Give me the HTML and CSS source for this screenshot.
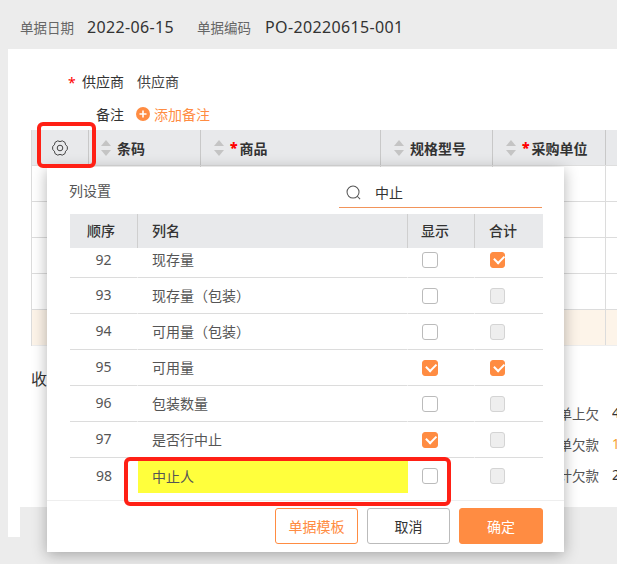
FILE: index.html
```html
<!DOCTYPE html>
<html lang="zh">
<head>
<meta charset="utf-8">
<title>列设置</title>
<link rel="stylesheet" href="styles.css">
</head>
<body>
<div class="page">
  <header class="top">
    <span class="top-label">单据日期</span><span class="top-value">2022-06-15</span>
    <span class="top-label second">单据编码</span><span class="top-value">PO-20220615-001</span>
  </header>
  <main class="sheet">
    <div class="form-row first"><span class="req">*</span><span class="form-label">供应商</span><span class="form-value">供应商</span></div>
    <div class="form-row"><span class="form-label plain">备注</span>
      <span class="add"><svg class="add-icon" viewBox="0 0 14 14"><circle cx="7" cy="7" r="7" fill="#ff8c42"/><path d="M7 3.5v7M3.5 7h7" stroke="#fff" stroke-width="1.6"/></svg>添加备注</span></div>
    <div class="grid">
      <div class="grid-row head">
        <div class="c c0"><svg class="gear" viewBox="0 0 16 16" fill="none" stroke="#444" stroke-width="1"><path d="M15.34 6.44L15.34 9.56L13.54 11.2L13.02 13.57L10.32 15.13L8 14.4L5.68 15.13L2.98 13.57L2.46 11.2L.66 9.56L.66 6.44L2.46 4.8L2.98 2.43L5.68 .87L8 1.6L10.32 .87L13.02 2.43L13.54 4.8Z" stroke-linejoin="round"/><circle cx="8" cy="8" r="2.8"/></svg></div>
        <div class="c c1"><i class="sort"></i>条码</div>
        <div class="c c2"><i class="sort"></i><b class="star">*</b>商品</div>
        <div class="c c3"><i class="sort"></i>规格型号</div>
        <div class="c c4"><i class="sort"></i><b class="star">*</b>采购单位</div>
        <div class="c c5"></div>
      </div>
      <div class="grid-row"><div class="c c0"></div><div class="c c1"></div><div class="c c2"></div><div class="c c3"></div><div class="c c4"></div><div class="c c5"></div></div>
      <div class="grid-row"><div class="c c0"></div><div class="c c1"></div><div class="c c2"></div><div class="c c3"></div><div class="c c4"></div><div class="c c5"></div></div>
      <div class="grid-row"><div class="c c0"></div><div class="c c1"></div><div class="c c2"></div><div class="c c3"></div><div class="c c4"></div><div class="c c5"></div></div>
      <div class="grid-row"><div class="c c0"></div><div class="c c1"></div><div class="c c2"></div><div class="c c3"></div><div class="c c4"></div><div class="c c5"></div></div>
      <div class="grid-row total"><div class="c c0"></div><div class="c c1"></div><div class="c c2"></div><div class="c c3"></div><div class="c c4"></div><div class="c c5"></div></div>
    </div>
    <div class="lower">
      <div class="receive">收</div>
      <div class="sums">
        <div class="sum"><span>本单上欠</span><em>4</em></div>
        <div class="sum"><span>本单欠款</span><em class="hot">1</em></div>
        <div class="sum"><span>累计欠款</span><em>2</em></div>
      </div>
    </div>
    <div class="sheet-foot"></div>
  </main>
</div>

<section class="modal">
  <div class="modal-top">
    <span class="modal-title">列设置</span>
    <div class="search">
      <svg class="search-icon" viewBox="0 0 16 16" fill="none" stroke="#555" stroke-width="1.1"><circle cx="7.5" cy="7.5" r="6.4"/><path d="M12 12l3 3"/></svg>
      <span>中止</span>
    </div>
  </div>
  <div class="cols-head">
    <div class="k1">顺序</div><div class="k2">列名</div><div class="k3">显示</div><div class="k4">合计</div>
  </div>
  <div class="cols-body">
    <div class="col-row clip"><div class="k1">92</div><div class="k2">现存量</div><div class="k3"><i class="box"></i></div><div class="k4"><i class="box on"></i></div></div>
    <div class="col-row"><div class="k1">93</div><div class="k2">现存量（包装）</div><div class="k3"><i class="box"></i></div><div class="k4"><i class="box off"></i></div></div>
    <div class="col-row"><div class="k1">94</div><div class="k2">可用量（包装）</div><div class="k3"><i class="box"></i></div><div class="k4"><i class="box off"></i></div></div>
    <div class="col-row"><div class="k1">95</div><div class="k2">可用量</div><div class="k3"><i class="box on"></i></div><div class="k4"><i class="box on"></i></div></div>
    <div class="col-row"><div class="k1">96</div><div class="k2">包装数量</div><div class="k3"><i class="box"></i></div><div class="k4"><i class="box off"></i></div></div>
    <div class="col-row"><div class="k1">97</div><div class="k2">是否行中止</div><div class="k3"><i class="box on"></i></div><div class="k4"><i class="box off"></i></div></div>
    <div class="col-row last"><div class="k1">98</div><div class="k2 marked"><span>中止人</span></div><div class="k3"><i class="box"></i></div><div class="k4"><i class="box off"></i></div></div>
  </div>
  <div class="modal-foot">
    <button class="btn tpl">单据模板</button>
    <button class="btn">取消</button>
    <button class="btn ok">确定</button>
  </div>
</section>

<div class="mark mark-gear"></div>
<div class="mark mark-row"></div>
</body>
</html>
```
FILE: styles.css
```css
* { box-sizing: border-box; }
html, body { margin: 0; height: 100%; }
body {
  width: 617px; height: 564px; overflow: hidden; position: relative;
  background: #ececec; color: #333;
  font-family: "Noto Sans", "Noto Sans CJK SC", sans-serif; font-size: 14px;
}
.page { height: 100%; display: flex; flex-direction: column; }
.top { height: 49px; padding: 4px 0 0 20px; display: flex; align-items: center; white-space: nowrap; }
.top-label { color: #666; font-size: 13.5px; margin-right: 13px; }
.top-label.second { margin-left: 23px; margin-right: 14px; }
.top-value { font-size: 16px; letter-spacing: .35px; color: #333; }
.sheet { margin-left: 8px; flex: none; height: 488px; background: #fff; display: flex; flex-direction: column; }
.form-row { display: flex; align-items: center; height: 33px; padding-left: 60px; white-space: nowrap; }
.form-row.first { margin-top: 15px; }
.req { color: #f00; width: 14px; padding-top: 3px; }
.form-label { width: 55px; color: #333; }
.form-label.plain { padding-left: 28px; width: 68px; }
.form-value { color: #444; }
.add { color: #ff8c42; display: flex; align-items: center; gap: 4px; }
.add-icon { width: 14px; height: 14px; }
.grid { margin: 0 0 0 23px; display: flex; flex-direction: column; border-left: 1px solid #dcdcdc; }
.grid-row { display: flex; height: 36px; border-bottom: 1px solid #dcdcdc; }
.grid-row.head { background: #e8e9eb; border-bottom-color: #dedede; font-weight: 700; color: #333; }
.grid-row.total { background: #fdf4e9; border-bottom-color: #eee; }
.c { border-right: 1px solid #dcdcdc; display: flex; align-items: center; flex: none; white-space: nowrap; padding-left: 8px; }
.head .c { border-right-color: #c8c8c8; }
.c0 { width: 57px; padding-left: 20px; }
.c1 { width: 112px; padding-left: 13px; }
.c2 { width: 180px; padding-left: 14px; }
.c3 { width: 112px; padding-left: 14px; }
.c4 { width: 113px; padding-left: 14px; }
.c5 { width: 40px; border-right: 0; }
.gear { width: 16px; height: 16px; }
.sort { width: 9px; height: 16px; margin-right: 6px; position: relative; display: block; }
.sort::before, .sort::after { content: ""; position: absolute; left: -1px; border-left: 5.5px solid transparent; border-right: 5.5px solid transparent; }
.sort::before { top: 0; border-bottom: 6.5px solid #c4c4c4; }
.sort::after { bottom: 0; border-top: 6.5px solid #c4c4c4; }
.star { color: #f00; margin-right: 2px; }
.lower { flex: 1; position: relative; margin-left: 23px; display: flex; justify-content: space-between; }
.receive { font-size: 16px; color: #333; padding-top: 20px; }
.sums { padding-top: 56px; display: flex; flex-direction: column; gap: 10px; }
.sum { display: flex; height: 21px; align-items: center; font-size: 13.5px; color: #555; }
.sum em { font-style: normal; margin-left: 13px; width: 5px; overflow: hidden; color: #333; }
.sum em.hot { color: #f5a030; }
.sheet-foot { margin-left: 12px; height: 30px; background: #ececec; }

.modal { position: absolute; left: 47px; top: 167px; width: 517px; height: 385px; background: #fff; box-shadow: 0 3px 14px rgba(0,0,0,.3); display: flex; flex-direction: column; }
.modal-top { height: 47px; padding: 0 22px; display: flex; justify-content: space-between; align-items: flex-start; }
.modal-title { margin-top: 13px; color: #555; }
.search { width: 203px; height: 41px; border-bottom: 1px solid #f2945a; display: flex; align-items: center; padding: 10px 0 0 7px; gap: 14px; color: #333; }
.search-icon { width: 15px; height: 15px; }
.cols-head, .col-row { margin: 0 21px 0 23px; display: flex; }
.cols-head { height: 34px; background: #e8e9eb; font-weight: 500; color: #333; }
.cols-head > div { display: flex; align-items: center; border-right: 1px solid #cfcfcf; padding-bottom: 3px; }
.cols-head > .k4 { border-right: 0; }
.cols-head > .k1 { justify-content: flex-start; padding-left: 17px; }
.k1 { width: 68px; justify-content: center; }
.k2 { width: 270px; padding-left: 14px; }
.k3 { width: 67px; padding-left: 14px; }
.k4 { width: 68px; padding-left: 15px; }
.cols-head > .k3 { padding-left: 13px; }
.cols-head > .k4 { padding-left: 14px; }
.cols-body { height: 253px; overflow: hidden; border-bottom: 1px solid #eee; }
.col-row { height: 36px; color: #555; }
.col-row > div { display: flex; align-items: center; border-bottom: 1px solid #dcdcdc; border-right: 1px solid #fff; }
.col-row > .k4 { border-right: 0; }
.col-row > .k1, .col-row > .k2 { padding-bottom: 2px; }
.col-row.clip { height: 30px; }
.col-row.clip > div { padding-bottom: 6px; }
.col-row.clip > .k2 { padding-bottom: 8px; }
.col-row.last { height: 42px; }
.col-row.last > div { align-items: flex-start; border: 0; }
.col-row.last > .k1 { padding: 8px 0 0; }
.col-row.last > .k3, .col-row.last > .k4 { padding-top: 10px; }
.col-row.last > .k2.marked { padding: 3px 0 0; }
.marked span { background: #ffff3c; width: 270px; height: 32px; padding: 0 0 3px 14px; display: flex; align-items: center; }
.box { width: 16px; height: 16px; border: 1px solid #bbb; border-radius: 3px; display: block; position: relative; background: #fff; }
.k4 .box { width: 15px; }
.box.off { background: #eee; border-color: #d4d4d4; }
.box.on { background: #ff8c42; border-color: #ff8c42; }
.box.on::after { content: ""; position: absolute; left: 3px; top: 2.5px; width: 8px; height: 4.5px; border-left: 2px solid #fff; border-bottom: 2px solid #fff; transform: rotate(-45deg); }
.modal-foot { flex: 1; display: flex; justify-content: flex-end; align-items: flex-start; padding: 7px 21px 0 0; gap: 9px; }
.btn { height: 36px; width: 83px; border: 1px solid #bbb; border-radius: 3px; background: #fff; color: #333; font: inherit; padding: 0; }
.btn.tpl { border-color: #ff8c42; color: #ff8c42; }
.btn.ok { width: 84px; background: #ff8c42; border-color: #ff8c42; color: #fff; }

.mark { position: absolute; border: 4px solid #ff2015; border-radius: 6px; }
.mark-gear { left: 37px; top: 122px; width: 59px; height: 46px; }
.mark-row { left: 124px; top: 457px; width: 327px; height: 49px; }
```
